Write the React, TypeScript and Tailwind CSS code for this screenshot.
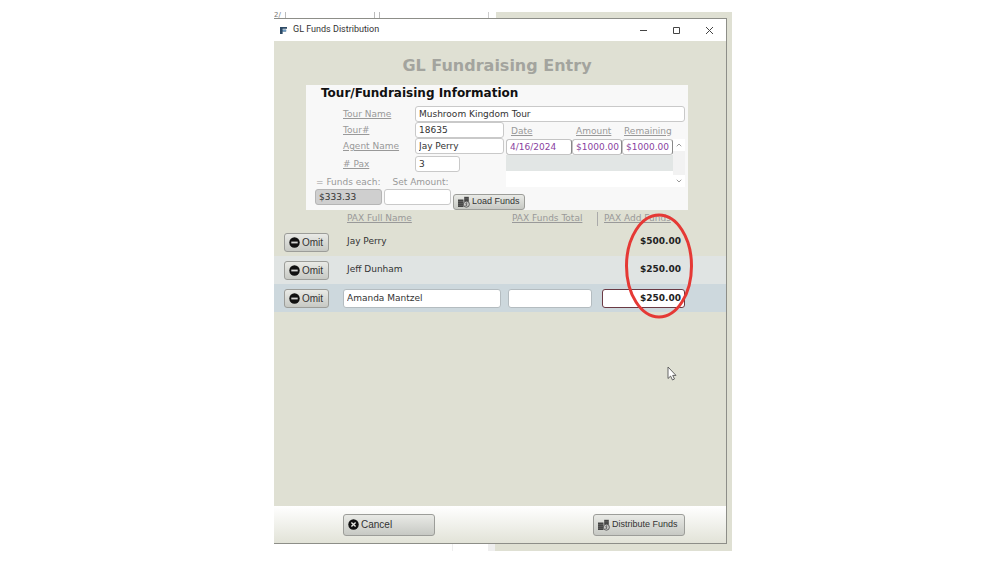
import { useState } from "react";
import type { ReactNode } from "react";
import clsx from "clsx";
import { ChevronDown, ChevronUp } from "lucide-react";

type Pax = {
  id: number;
  name: string;
  total: string;
  add: string;
};

const initialPax: Pax[] = [
  { id: 1, name: "Jay Perry", total: "", add: "$500.00" },
  { id: 2, name: "Jeff Dunham", total: "", add: "$250.00" },
  { id: 3, name: "Amanda Mantzel", total: "", add: "$250.00" },
];

const FIELD =
  "h-4 min-w-0 rounded-[3px] border border-[#c9c9c9] bg-white px-[3px] text-[9px] text-[#333] outline-none";
const LABEL = "text-[9px] leading-4 text-[#999]";

function AppIcon() {
  return (
    <svg viewBox="0 0 8 8" className="h-[7px] w-[7px]" aria-hidden="true">
      <path d="M0 0h8v2H3v1h4v2H3v3H0z" fill="#2d4a66" />
      <path d="M3 3h4v2H3z" fill="#6d9cc4" />
    </svg>
  );
}

function FundsIcon() {
  return (
    <svg viewBox="0 0 12 12" className="h-3 w-3 shrink-0" aria-hidden="true">
      <path d="M0 3.5h5.5V11H0z" fill="#444" />
      <path d="M6.2 .8h4.6v5H6.2z" fill="#444" />
      <path d="M0 5.5h5.5M0 7.4h5.5M0 9.3h5.5M6.2 2.8h4.6" stroke="#858583" strokeWidth="0.4" />
      <circle cx="8.4" cy="8.2" r="3" fill="#c9c9c7" stroke="#555" strokeWidth="0.9" />
      <path
        d="M9.4 7.1c-1.7-.7-2.3.7-1 1.1s.7 1.8-1.1 1.1M8.4 6.5v3.4"
        fill="none"
        stroke="#555"
        strokeWidth="0.6"
      />
    </svg>
  );
}

function OmitIcon() {
  return (
    <svg viewBox="0 0 12 12" className="h-[11px] w-[11px] shrink-0" aria-hidden="true">
      <circle cx="6" cy="6" r="5.7" fill="#111" />
      <path d="M2.5 5h7v2h-7z" fill="#d5d5d3" />
    </svg>
  );
}

function CancelIcon() {
  return (
    <svg viewBox="0 0 12 12" className="h-[11px] w-[11px] shrink-0" aria-hidden="true">
      <circle cx="6" cy="6" r="5.7" fill="#111" />
      <path d="M3.7 3.7l4.6 4.6M8.3 3.7L3.7 8.3" stroke="#e8e8e4" strokeWidth="1.5" />
    </svg>
  );
}

function ToolButton({
  className,
  children,
  onClick,
}: {
  className?: string;
  children: ReactNode;
  onClick?: () => void;
}) {
  return (
    <button
      type="button"
      onClick={onClick}
      className={clsx(
        "flex items-center gap-[2px] rounded-[3px] border border-[#9c9d99] bg-linear-to-b from-[#e9eae6] to-[#c7c9c4] px-1 font-['Liberation_Sans',sans-serif] whitespace-nowrap text-[#333]",
        className
      )}
    >
      {children}
    </button>
  );
}

function TitleBar() {
  return (
    <header className="flex h-[22px] items-center bg-white pl-[6px] font-['Roboto',sans-serif] text-[#333]">
      <AppIcon />
      <span className="flex-1 pl-[6px] text-[9px]">GL Funds Distribution</span>
      <button type="button" aria-label="Minimize" className="flex w-[33px] justify-center">
        <svg viewBox="0 0 9 9" className="h-[9px] w-[9px]">
          <path d="M1 4.5h7" stroke="#444" />
        </svg>
      </button>
      <button type="button" aria-label="Maximize" className="flex w-[33px] justify-center">
        <svg viewBox="0 0 9 9" className="h-[9px] w-[9px]">
          <path d="M1.5 1.5h6v6h-6z" fill="none" stroke="#444" />
        </svg>
      </button>
      <button type="button" aria-label="Close" className="flex w-[33px] justify-center">
        <svg viewBox="0 0 9 9" className="h-[9px] w-[9px]">
          <path d="M1 1l7 7M8 1L1 8" stroke="#444" />
        </svg>
      </button>
    </header>
  );
}

function Deposits() {
  return (
    <div className="flex flex-1 items-start pl-[2px]">
      <table className="flex-1 table-fixed border-collapse text-[9px] leading-4">
        <colgroup>
          <col className="w-[66px]" />
          <col className="w-[50px]" />
          <col />
        </colgroup>
        <thead>
          <tr className="h-[17px] text-left text-[#999]">
            <th className="p-0 pl-[5px] font-normal underline">Date</th>
            <th className="p-0 pl-1 font-normal underline">Amount</th>
            <th className="p-0 pl-[2px] font-normal underline">Remaining</th>
          </tr>
        </thead>
        <tbody>
          <tr className="h-4 bg-white text-[#8a3fa0]">
            {["4/16/2024", "$1000.00", "$1000.00"].map((value, i) => (
              <td key={i} className="p-0">
                <div className="h-4 rounded-[3px] border border-[#c4c4c4] border-r-[#888] pl-[3px] leading-[14px]">
                  {value}
                </div>
              </td>
            ))}
          </tr>
          <tr className="h-4 bg-[#e2e6e5]">
            <td colSpan={3} className="p-0" />
          </tr>
          <tr className="h-4 bg-white">
            <td colSpan={3} className="p-0" />
          </tr>
        </tbody>
      </table>
      <div className="mt-[17px] flex h-12 w-3 flex-col justify-between bg-[#f2f2f2]">
        <button
          type="button"
          aria-label="Scroll up"
          className="flex h-3 items-center justify-center bg-white text-[#666]"
        >
          <ChevronUp size={8} />
        </button>
        <button
          type="button"
          aria-label="Scroll down"
          className="flex h-3 items-center justify-center bg-white text-[#666]"
        >
          <ChevronDown size={8} />
        </button>
      </div>
    </div>
  );
}

function TourInfo() {
  return (
    <section className="mr-[38px] ml-8 bg-[#f8f8f8] pr-[3px] text-[9px]">
      <h2 className="h-[21px] pl-[15px] text-[12px] leading-4 font-bold text-[#111]">
        Tour/Fundraising Information
      </h2>
      <div className="flex pl-[37px]">
        <label htmlFor="tour-name" className={clsx(LABEL, "w-[72px] underline")}>
          Tour Name
        </label>
        <input
          id="tour-name"
          className={clsx(FIELD, "flex-1")}
          defaultValue="Mushroom Kingdom Tour"
        />
      </div>
      <div className="flex">
        <div className="w-[198px]">
          <div className="flex pl-[37px]">
            <label htmlFor="tour-no" className={clsx(LABEL, "w-[72px] underline")}>
              Tour#
            </label>
            <input id="tour-no" className={clsx(FIELD, "flex-1")} defaultValue="18635" />
          </div>
          <div className="flex pl-[37px]">
            <label htmlFor="agent" className={clsx(LABEL, "w-[72px] underline")}>
              Agent Name
            </label>
            <input id="agent" className={clsx(FIELD, "flex-1")} defaultValue="Jay Perry" />
          </div>
          <div className="flex pt-[2px] pl-[37px]">
            <label htmlFor="pax-count" className={clsx(LABEL, "w-[72px] underline")}>
              # Pax
            </label>
            <input id="pax-count" className={clsx(FIELD, "w-[45px]")} defaultValue="3" />
          </div>
          <div className="flex h-[17px] gap-3 pt-[2px] pl-[10px]">
            <label htmlFor="funds-each" className={LABEL}>
              = Funds each:
            </label>
            <label htmlFor="set-amount" className={LABEL}>
              Set Amount:
            </label>
          </div>
        </div>
        <Deposits />
      </div>
      <div className="flex h-[21px] gap-[2px] pl-[9px]">
        <input
          id="funds-each"
          readOnly
          className="h-4 w-[67px] rounded-[3px] border border-[#b5b5b5] bg-[#cfcfcf] px-[3px] text-[9px] text-[#333] outline-none"
          value="$333.33"
        />
        <input id="set-amount" className={clsx(FIELD, "w-[67px]")} />
        <ToolButton className="mt-[5px] h-4 text-[9px]">
          <FundsIcon />
          Load Funds
        </ToolButton>
      </div>
    </section>
  );
}

function PaxList() {
  const [pax, setPax] = useState(initialPax);
  const activeId = 3;

  return (
    <div className="relative">
      <table className="w-full table-fixed border-collapse text-[9px] text-[#333]">
        <colgroup>
          <col className="w-[69px]" />
          <col className="w-[165px]" />
          <col className="w-[94px]" />
          <col />
        </colgroup>
        <thead>
          <tr className="h-[18px] text-left text-[#999]">
            <th className="p-0" aria-label="Omit" />
            <th className="p-0 pl-1 font-normal underline">PAX Full Name</th>
            <th className="p-0 font-normal">
              <div className="mr-1 border-r border-[#aaa] pl-1 underline">PAX Funds Total</div>
            </th>
            <th className="p-0 pl-[2px] font-normal underline">PAX Add Funds</th>
          </tr>
        </thead>
        <tbody>
          {pax.map((row, i) => {
            const active = row.id === activeId;
            return (
              <tr
                key={row.id}
                className={clsx(
                  "h-7",
                  active ? "bg-[#cdd8dd]" : i % 2 === 1 ? "bg-[#e0e4e3]" : "bg-[#dfe0d3]"
                )}
              >
                <td className="p-0 pl-[10px]">
                  <ToolButton
                    className="h-[19px] w-[45px] text-[10px]"
                    onClick={() => setPax((prev) => prev.filter((p) => p.id !== row.id))}
                  >
                    <OmitIcon />
                    Omit
                  </ToolButton>
                </td>
                <td className="p-0">
                  {active ? (
                    <input
                      aria-label="PAX Full Name"
                      className="block h-[19px] w-[158px] rounded-[3px] border border-[#b4bcc0] bg-white px-[3px] outline-none"
                      defaultValue={row.name}
                    />
                  ) : (
                    <span className="pl-1">{row.name}</span>
                  )}
                </td>
                <td className="p-0">
                  {active ? (
                    <input
                      aria-label="PAX Funds Total"
                      className="block h-[19px] w-[84px] rounded-[3px] border border-[#b4bcc0] bg-white px-[3px] outline-none"
                      defaultValue={row.total}
                    />
                  ) : (
                    row.total
                  )}
                </td>
                <td className="p-0 pr-[41px] text-right font-bold text-[#222]">
                  {active ? (
                    <input
                      aria-label="PAX Add Funds"
                      className="block h-[19px] w-full rounded-[3px] border border-[#6b3a44] bg-white px-[3px] text-right font-bold outline-none"
                      defaultValue={row.add}
                    />
                  ) : (
                    <span className="pr-1">{row.add}</span>
                  )}
                </td>
              </tr>
            );
          })}
        </tbody>
      </table>
      <svg
        viewBox="0 0 70 108"
        className="pointer-events-none absolute top-[2px] right-[32px] h-[108px] w-[70px]"
        aria-hidden="true"
      >
        <ellipse cx="35" cy="54" rx="32.5" ry="51" fill="none" stroke="#e53935" strokeWidth="3" />
      </svg>
      <svg
        viewBox="0 0 10 15"
        className="pointer-events-none absolute top-[156px] right-[49px] h-[15px] w-[10px]"
        aria-hidden="true"
      >
        <path
          d="M1 1v11.5l2.6-2.4L5.5 14l2-1-1.8-3.6H9z"
          fill="#fff"
          stroke="#555"
          strokeWidth="0.9"
        />
      </svg>
    </div>
  );
}

export default function App() {
  return (
    <div className="flex min-h-screen justify-center bg-white py-3 pl-[6px] font-['DejaVu_Sans',sans-serif]">
      <div className="flex w-full max-w-[458px] flex-col bg-[#dfe0d3]">
        <div className="flex h-[6px]">
          <div className="flex w-[222px] overflow-hidden bg-white">
            <span className="w-3 border-r border-[#bbb] text-[7px] leading-[6px] text-[#777]">2/</span>
            <span className="w-[89px] border-r border-[#bbb]" />
            <span className="w-[5px] border-r border-[#bbb]" />
            <span className="w-[109px] border-r border-[#ccc]" />
          </div>
        </div>

        <main className="mr-[5px] flex flex-1 flex-col border-t border-r border-b border-[#8d8e88]">
          <TitleBar />
          <div className="flex-1">
            <h1 className="pt-[13px] pr-[6px] pb-[7px] text-center text-[16px] leading-6 font-bold text-[#a3a49e]">
              GL Fundraising Entry
            </h1>
            <TourInfo />
            <PaxList />
          </div>
          <footer className="flex h-[37px] items-center justify-between bg-linear-to-b from-white to-[#e2e3d8] pr-[41px] pl-[69px]">
            <ToolButton className="h-[22px] w-[92px] text-[10px]">
              <CancelIcon />
              Cancel
            </ToolButton>
            <ToolButton className="h-[22px] w-[92px] text-[9px]">
              <FundsIcon />
              Distribute Funds
            </ToolButton>
          </footer>
        </main>

        <div className="flex h-[7px]">
          <div className="flex w-[221px] justify-end bg-white">
            <span className="w-9 border-l border-[#eee]" />
            <span className="w-[7px] bg-[#eee]" />
          </div>
        </div>
      </div>
    </div>
  );
}
